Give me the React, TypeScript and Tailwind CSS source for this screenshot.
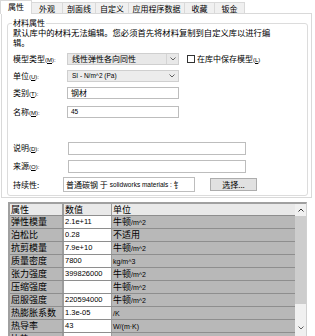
import React from "react";

const cjk = "font-['Noto_Sans_CJK_SC',sans-serif]";
const lat = "font-['Liberation_Sans','Noto_Sans_CJK_SC',sans-serif]";

function Chevron({ up = false }: { up?: boolean }) {
  return (
    <svg width="6" height="4" viewBox="0 0 6 4" className="block">
      <polyline
        points={up ? "0.5,3.5 3,1 5.5,3.5" : "0.5,0.5 3,3 5.5,0.5"}
        fill="none"
        stroke={up ? "#333" : "#606060"}
        strokeWidth="1"
      />
    </svg>
  );
}

function Label({ zh, k, w }: { zh: string; k?: string; w: string }) {
  return (
    <div className={`${w} shrink-0 pl-[5px] text-[8px] leading-[10px] text-black whitespace-nowrap`}>
      {zh}
      {k ? (
        <span className={`${lat} text-[6px]`}>
          (<span className="underline">{k}</span>):
        </span>
      ) : (
        ":"
      )}
    </div>
  );
}

type Row = { name: string; value: string; unit: React.ReactNode };

const units = {
  pa: (
    <>
      牛顿<span className={`${lat} text-[7px]`}>/m^2</span>
    </>
  ),
};

const rows: Row[] = [
  { name: "弹性模量", value: "2.1e+11", unit: units.pa },
  { name: "泊松比", value: "0.28", unit: "不适用" },
  { name: "抗剪模量", value: "7.9e+10", unit: units.pa },
  { name: "质量密度", value: "7800", unit: <span className={`${lat} text-[7px]`}>kg/m^3</span> },
  { name: "张力强度", value: "399826000", unit: units.pa },
  { name: "压缩强度", value: "", unit: units.pa },
  { name: "屈服强度", value: "220594000", unit: units.pa },
  { name: "热膨胀系数", value: "1.3e-05", unit: <span className={`${lat} text-[7px]`}>/K</span> },
  { name: "热导率", value: "43", unit: <span className={`${lat} text-[7px]`}>W/(m·K)</span> },
  { name: "比热", value: "", unit: "" },
];

export default function App() {
  const tabs = [
    { t: "外观", w: "w-[31px]" },
    { t: "剖面线", w: "w-[33px]" },
    { t: "自定义", w: "w-[33px]" },
    { t: "应用程序数据", w: "w-[56px]" },
    { t: "收藏", w: "w-[30px]" },
    { t: "钣金", w: "w-[30px]" },
  ];
  return (
    <div className={`${cjk} relative h-[336px] w-[315px] overflow-hidden bg-white text-black`}>
      {/* tab strip */}
      <div className="flex h-[14px] items-end">
        <div className="relative z-10 flex h-[14px] w-[32px] items-center justify-center border-x border-t border-[#d9d9d9] bg-white pb-[1px] text-[8px] leading-[10px]">
          属性
        </div>
        {tabs.map((t) => (
          <div
            key={t.t}
            className={`${t.w} flex h-[12px] items-center justify-center border-r border-t border-[#d9d9d9] bg-[#f0f0f0] text-[8px] leading-[10px]`}
          >
            {t.t}
          </div>
        ))}
      </div>

      {/* tab panel */}
      <div className="relative -mt-px ml-px h-[185px] w-[311px] border border-[#d9d9d9] bg-white">
        <div className="relative ml-[5px] mt-[9px] h-[173px] w-[301px] rounded-[3px] border border-[#dcdcdc]">
          <div className="absolute left-[4px] top-[-5px] bg-white px-[1px] text-[8px] leading-[8px]">
            材料属性
          </div>
          <div className="pl-[5px] pt-[3px] text-[8.3px] leading-[10px] whitespace-nowrap">
            默认库中的材料无法编辑。您必须首先将材料复制到自定义库以进行编
            <br />
            辑。
          </div>

          {/* model type */}
          <div className="mt-[6px] flex h-[12px] items-center">
            <Label zh="模型类型" k="M" w="w-[59px]" />
            <div className="flex h-[12px] w-[112px] items-center border border-[#cfcfcf] bg-[#e8e8e8]">
              <div className="flex-1 pl-[4px] text-[8px] leading-[10px] whitespace-nowrap">线性弹性各向同性</div>
              <div className="flex h-full w-[12px] items-center justify-center border-l border-[#d4d4d4]">
                <Chevron />
              </div>
            </div>
            <div className="ml-[8px] h-[8px] w-[8px] border border-[#333] bg-white" />
            <div className="ml-[2px] text-[8px] leading-[10px] whitespace-nowrap">
              在库中保存模型
              <span className={`${lat} text-[6px]`}>
                (<span className="underline">L</span>)
              </span>
            </div>
          </div>

          {/* unit */}
          <div className="mt-[5px] flex h-[12px] items-center">
            <Label zh="单位" k="U" w="w-[59px]" />
            <div className="flex h-[12px] w-[112px] items-center border border-[#cfcfcf] bg-[#ececec]">
              <div className={`${lat} flex-1 pl-[4px] text-[6.5px] leading-[10px] whitespace-nowrap`}>SI - N/m^2 (Pa)</div>
              <div className="flex h-full w-[12px] items-center justify-center">
                <Chevron />
              </div>
            </div>
          </div>

          {/* category */}
          <div className="mt-[5px] flex h-[12px] items-center">
            <Label zh="类别" k="T" w="w-[59px]" />
            <div className="flex h-[12px] w-[112px] items-center border border-[#bdbdbd] bg-white pl-[3px] text-[8px] leading-[10px]">
              钢材
            </div>
          </div>

          {/* name */}
          <div className="mt-[7px] flex h-[12px] items-center">
            <Label zh="名称" k="M" w="w-[59px]" />
            <div className={`${lat} flex h-[12px] w-[112px] items-center border border-[#bdbdbd] bg-white pl-[3px] text-[6.5px] leading-[10px]`}>
              45
            </div>
          </div>

          {/* description */}
          <div className="mt-[24px] flex h-[13px] items-center">
            <Label zh="说明" k="D" w="w-[60px]" />
            <div className="h-[13px] w-[178px] border border-[#bdbdbd] bg-white" />
          </div>

          {/* source */}
          <div className="mt-[5px] flex h-[13px] items-center">
            <Label zh="来源" k="O" w="w-[60px]" />
            <div className="h-[13px] w-[178px] border border-[#bdbdbd] bg-white" />
          </div>

          {/* sustainability */}
          <div className="mt-[4px] flex h-[15px] items-center">
            <Label zh="持续性" w="w-[55px]" />
            <div className="flex h-[15px] w-[132px] items-center overflow-hidden border border-[#bdbdbd] bg-white pl-[2px] text-[8px] leading-[10px] whitespace-nowrap">
              普通碳钢 于 <span className={`${lat} ml-[2px] text-[6.5px]`}>solidworks materials :</span>&nbsp;钅
            </div>
            <div className="ml-[15px] flex h-[13px] w-[47px] items-center justify-center border border-[#adadad] bg-[#e1e1e1] text-[8px] leading-[10px]">
              选择...
            </div>
          </div>
        </div>
      </div>

      {/* property table */}
      <div className="ml-[8px] mt-[4px] flex h-[134px] w-[299px] border-l-2 border-r border-t-2 border-l-[#a0a0a0] border-r-[#d0d0d0] border-t-[#a0a0a0]">
        <div className="w-[285px] shrink-0">
          <div className="flex h-[12px] border-b border-[#8e8e8e] bg-[#e9e9e9] text-[9px] leading-[11px]">
            <div className="w-[54px] shrink-0 border-r-2 border-[#9c9c9c] pl-[1px]">属性</div>
            <div className="w-[48px] shrink-0 border-r border-[#9c9c9c] pl-[1px]">数值</div>
            <div className="flex-1 pl-[1px]">单位</div>
          </div>
          {rows.map((r) => (
            <div key={r.name} className="flex h-[13px] border-b border-[#8e8e8e] text-[9px] leading-[12px]">
              <div className="w-[54px] shrink-0 whitespace-nowrap border-r-2 border-[#9c9c9c] bg-[#b8b8b8] pl-[1px]">
                {r.name}
              </div>
              <div className={`${lat} flex w-[48px] shrink-0 items-center border-r border-[#9c9c9c] bg-white pl-[1px] text-[7.5px]`}>
                {r.value}
              </div>
              <div className="flex-1 whitespace-nowrap bg-[#b8b8b8] pl-[1px]">{r.unit}</div>
            </div>
          ))}
        </div>
        <div className="flex w-[11px] shrink-0 flex-col bg-[#f0f0f0]">
          <div className="flex h-[12px] items-center justify-center">
            <Chevron up />
          </div>
          <div className="h-[88px] bg-[#cdcdcd]" />
          <div className="h-[18px]" />
          <div className="flex h-[12px] items-center justify-center">
            <Chevron />
          </div>
        </div>
      </div>
    </div>
  );
}
